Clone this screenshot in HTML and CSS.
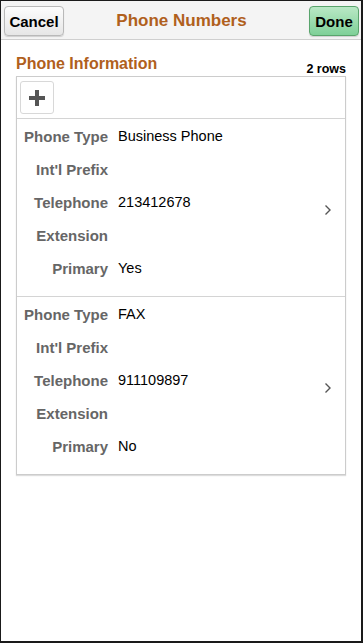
FILE: index.html
```html
<!DOCTYPE html>
<html lang="en">
<head>
<meta charset="UTF-8" />
<meta name="viewport" content="width=device-width, initial-scale=1" />
<title>Phone Numbers</title>
<link rel="stylesheet" href="styles.css">
</head>
<body>
  <div class="frame">

    <!-- Top bar -->
    <div class="topbar">
      <div class="bar-left"><button class="btn btn-cancel">Cancel</button></div>
      <h1 class="page-title">Phone Numbers</h1>
      <div class="bar-right"><button class="btn btn-done">Done</button></div>
    </div>

    <div class="content">
      <div class="section-head">
        <h2 class="section-title">Phone Information</h2>
        <span class="row-count">2 rows</span>
      </div>

      <div class="grid">
        <div class="grid-toolbar">
          <button class="add-btn" aria-label="Add row">
            <svg width="16" height="16" viewBox="0 0 16 16"><path d="M6 0h4v6h6v4h-6v6H6v-6H0V6h6z" fill="#555"/></svg>
          </button>
        </div>

        <div class="grid-row">
          <div class="fields">
            <div class="field"><span class="label">Phone Type</span><span class="value">Business Phone</span></div>
            <div class="field"><span class="label">Int'l Prefix</span><span class="value"></span></div>
            <div class="field"><span class="label">Telephone</span><span class="value">213412678</span></div>
            <div class="field"><span class="label">Extension</span><span class="value"></span></div>
            <div class="field"><span class="label">Primary</span><span class="value">Yes</span></div>
          </div>
          <svg class="chevron" width="8" height="12" viewBox="0 0 8 12"><path d="M1.5 1.5l4.5 4.5-4.5 4.5" fill="none" stroke="#555" stroke-width="1.4"/></svg>
        </div>

        <div class="grid-row">
          <div class="fields">
            <div class="field"><span class="label">Phone Type</span><span class="value">FAX</span></div>
            <div class="field"><span class="label">Int'l Prefix</span><span class="value"></span></div>
            <div class="field"><span class="label">Telephone</span><span class="value">911109897</span></div>
            <div class="field"><span class="label">Extension</span><span class="value"></span></div>
            <div class="field"><span class="label">Primary</span><span class="value">No</span></div>
          </div>
          <svg class="chevron" width="8" height="12" viewBox="0 0 8 12"><path d="M1.5 1.5l4.5 4.5-4.5 4.5" fill="none" stroke="#555" stroke-width="1.4"/></svg>
        </div>
      </div>
    </div>

  </div>
</body>
</html>
```

FILE: styles.css
```css
* {
  box-sizing: border-box;
}
html, body {
  margin: 0;
  height: 100%;
}
body {
  font-family: "Liberation Sans", Arial, sans-serif;
  color: #000;
  background: #fff;
}
.frame {
  height: 643px;
  border-style: solid;
  border-color: #1a1a1a;
  border-width: 1px 2px 2px 1px;
  background: #fff;
}

/* Top bar */
.topbar {
  height: 39px;
  display: grid;
  grid-template-columns: 1fr auto 1fr;
  align-items: center;
  padding: 0 2px 0 3px;
  background: #f4f4f4;
  border-bottom: 1px solid #cfcfcf;
}
.bar-right {
  text-align: right;
}
.page-title {
  margin: 2px 0 0;
  font-size: 17px;
  font-weight: 700;
  color: #b0601c;
}
.btn {
  height: 30px;
  margin-top: 2px;
  padding: 0 4px;
  font-family: inherit;
  font-size: 15px;
  font-weight: 700;
  color: #000;
  border-radius: 4px;
  cursor: pointer;
}
.btn-cancel {
  width: 60px;
  border: 1px solid #b9b9b9;
  background: linear-gradient(#fdfdfd, #e6e6e6);
  box-shadow: 0 1px 1px rgba(0, 0, 0, 0.15);
}
.btn-done {
  width: 50px;
  border: 1px solid #59a46c;
  background: linear-gradient(#b9e8c5, #7fd098);
  box-shadow: 0 1px 1px rgba(0, 0, 0, 0.15);
}

/* Content */
.content {
  padding: 14px 15px 0;
}
.section-head {
  display: flex;
  justify-content: space-between;
  align-items: flex-end;
  height: 22px;
}
.section-title {
  margin: 0 0 3px;
  font-size: 16px;
  font-weight: 700;
  color: #b0601c;
}
.row-count {
  font-size: 12.5px;
  font-weight: 700;
  margin-bottom: 0;
}
.grid {
  border: 1px solid #cccccc;
  box-shadow: 0 1px 1px #dddddd;
}
.grid-toolbar {
  padding: 4px 3px 4px;
  border-bottom: 1px solid #d4d4d4;
}
.add-btn {
  display: flex;
  align-items: center;
  justify-content: center;
  width: 34px;
  height: 33px;
  padding: 0;
  background: #fff;
  border: 1px solid #d8d8d8;
  border-radius: 3px;
}
.grid-row {
  display: flex;
  align-items: center;
  padding: 1px 0 11px;
  border-bottom: 1px solid #d4d4d4;
}
.grid-row:last-child {
  border-bottom: none;
}
.fields {
  flex: 1;
}
.field {
  display: flex;
  align-items: center;
  height: 33px;
}
.label {
  width: 91px;
  text-align: right;
  font-size: 15px;
  font-weight: 700;
  color: #666;
}
.value {
  margin-left: 10px;
  font-size: 14.5px;
  color: #000;
  position: relative;
  top: -1px;
}
.chevron {
  margin: 15px 13px 0 0;
}
```
